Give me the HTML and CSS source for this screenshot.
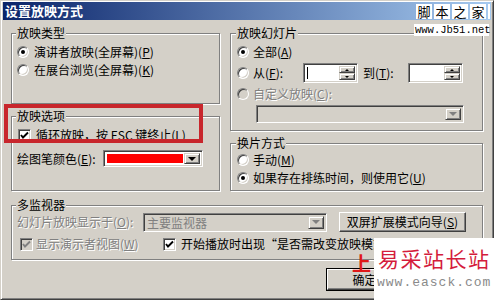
FILE: index.html
```html
<!DOCTYPE html>
<html lang="zh-CN">
<head>
<meta charset="utf-8">
<title>设置放映方式</title>
<link rel="stylesheet" href="styles.css">
</head>
<body>
<div class="window">
  <div class="titlebar">设置放映方式</div>
  <div class="content">
    <div class="cols">
      <div class="col">
        <fieldset class="grp g-type">
          <legend>放映类型</legend>
          <div class="row"><span class="radio on"></span><span class="lbl">演讲者放映(全屏幕)(<u>P</u>)</span></div>
          <div class="row"><span class="radio"></span><span class="lbl">在展台浏览(全屏幕)(<u>K</u>)</span></div>
        </fieldset>
        <fieldset class="grp g-opts">
          <legend>放映选项</legend>
          <div class="row"><span class="check"><svg viewBox="0 0 11 11" width="11" height="11"><polyline points="2,5 4,7.5 9,2.5" fill="none" stroke="#000" stroke-width="1.9"/></svg></span><span class="lbl">循环放映，按 ESC 键终止(<u>L</u>)</span></div>
          <div class="row row-pen"><span class="pen-lbl">绘图笔颜色(<u>E</u>):</span><span class="field combo color-combo"><span class="swatch"></span><span class="dd"><i class="arrow"></i></span></span></div>
        </fieldset>
      </div>
      <div class="col">
        <fieldset class="grp g-slides">
          <legend>放映幻灯片</legend>
          <div class="row"><span class="radio on"></span><span class="lbl">全部(<u>A</u>)</span></div>
          <div class="row row-range"><span class="radio"></span><span class="lbl from-lbl">从(<u>F</u>):</span><span class="field spin"><span class="caret"></span><span class="spin-btns"><span class="sb"><i class="up"></i></span><span class="sb"><i class="down"></i></span></span></span><span class="to-lbl">到(<u>T</u>):</span><span class="field spin"><span class="spin-btns"><span class="sb"><i class="up"></i></span><span class="sb"><i class="down"></i></span></span></span></div>
          <div class="row"><span class="radio off"></span><span class="lbl dis">自定义放映(<u>C</u>):</span></div>
          <div class="field combo disabled custom-combo"><span class="dd"><i class="arrow grey"></i></span></div>
        </fieldset>
        <fieldset class="grp g-adv">
          <legend>换片方式</legend>
          <div class="row"><span class="radio"></span><span class="lbl">手动(<u>M</u>)</span></div>
          <div class="row"><span class="radio on"></span><span class="lbl">如果存在排练时间，则使用它(<u>U</u>)</span></div>
        </fieldset>
      </div>
    </div>
    <fieldset class="grp g-mon">
      <legend>多监视器</legend>
      <div class="row mon1"><span class="dis mon-lbl">幻灯片放映显示于(<u>O</u>):</span><span class="field combo disabled mon-combo"><span class="val">主要监视器</span><span class="dd"><i class="arrow grey"></i></span></span><button class="btn wiz">双屏扩展模式向导(<u>S</u>)</button></div>
      <div class="row mon2"><span class="check off"><svg viewBox="0 0 11 11" width="11" height="11"><polyline points="2,5 4,7.5 9,2.5" fill="none" stroke="#808080" stroke-width="1.9"/></svg></span><span class="lbl dis pres">显示演示者视图(<u>W</u>)</span><span class="check"><svg viewBox="0 0 11 11" width="11" height="11"><polyline points="2,5 4,7.5 9,2.5" fill="none" stroke="#000" stroke-width="1.9"/></svg></span><span class="lbl prompt">开始播放时出现“是否需改变放映模式”提示(<u>N</u>)</span></div>
    </fieldset>
    <div class="actions"><button class="btn default">确定</button><button class="btn">取消</button></div>
  </div>
</div>
<div class="highlight"></div>
<div class="wm-jb">
  <div class="jb-boxes"><span>脚</span><span>本</span><span>之</span><span>家</span><span class="bar"></span></div>
  <div class="jb-url">www.Jb51.net</div>
</div>
<div class="wm-red">上</div>
<div class="wm-easck">
  <div class="easck-name">易采站长站</div>
  <div class="easck-url">www.easck.com</div>
</div>
</body>
</html>
```
FILE: styles.css
```css
* { box-sizing: border-box; }
html, body { margin: 0; padding: 0; }
body {
  position: relative;
  width: 494px;
  height: 300px;
  overflow: hidden;
  background: #d4d0c8;
  color: #000;
  font: 12px/18px "Noto Sans CJK SC", "Liberation Sans", sans-serif;
}
u { text-decoration: underline; text-underline-offset: 1px; }

.window {
  width: 494px;
  height: 300px;
  border: 1px solid;
  border-color: #d4d0c8 #404040 #404040 #d4d0c8;
  box-shadow: inset 1px 1px #fff, inset -1px -1px #808080;
  padding: 1px 2px 2px 2px;
}
.titlebar {
  height: 18px;
  line-height: 18px;
  padding-left: 2px;
  background: linear-gradient(to right, #0a246a, #a6caf0);
  color: #fff;
  font-weight: bold;
  font-size: 13px;
}
.content { padding: 0 8px; }
.cols {
  display: grid;
  grid-template-columns: 209px 253px;
  column-gap: 10px;
  margin-top: 6px;
}
.col { display: flex; flex-direction: column; }

.grp {
  margin: 0;
  min-width: 0;
  border: 1px solid #808080;
  box-shadow: 1px 1px 0 #fff, inset 1px 1px 0 #fff;
  padding: 3px 5px 0 5px;
}
.grp legend {
  padding: 0 1px;
  margin-left: -1px;
  line-height: 14px;
  font-size: 12px;
  background: #d4d0c8;
}
.g-type { height: 78px; }
.g-opts { height: 82px; margin-top: 5px; }
.g-slides { height: 105px; padding-left: 6px; }
.g-adv { height: 55px; margin-top: 5px; padding-left: 6px; padding-top: 1px; }
.g-mon { height: 62px; margin-top: 7px; padding-top: 0; }

.row { display: flex; align-items: center; height: 18px; white-space: nowrap; }
.lbl { margin-left: 5px; }
.dis { color: #808080; text-shadow: 1px 1px 0 #fff; }

.radio {
  position: relative;
  flex: none;
  width: 12px;
  height: 12px;
  border-radius: 50%;
  border: 1px solid;
  border-color: #808080 #fff #fff #808080;
  background: #fff;
  box-shadow: inset 1px 1px #404040, inset -1px -1px #d4d0c8;
}
.radio.on::after {
  content: "";
  position: absolute;
  left: 3px;
  top: 3px;
  width: 4px;
  height: 4px;
  border-radius: 50%;
  background: #000;
}
.radio.off { background: #d4d0c8; }

.check {
  flex: none;
  width: 13px;
  height: 13px;
  border: 1px solid;
  border-color: #808080 #fff #fff #808080;
  box-shadow: inset 1px 1px #404040, inset -1px -1px #d4d0c8;
  background: #fff;
  display: flex;
  align-items: center;
  justify-content: center;
}
.check svg { display: block; }
.check.off { background: #d4d0c8; }
.g-opts .row .check { margin-left: 1px; }

.field {
  border: 1px solid;
  border-color: #808080 #fff #fff #808080;
  box-shadow: inset 1px 1px #404040, inset -1px -1px #d4d0c8;
  background: #fff;
  padding: 2px;
}
.combo { display: flex; align-items: stretch; }
.combo.disabled { background: #d4d0c8; }
.dd {
  margin-left: auto;
  width: 16px;
  flex: none;
  border: 1px solid;
  border-color: #d4d0c8 #404040 #404040 #d4d0c8;
  box-shadow: inset 1px 1px #fff, inset -1px -1px #808080;
  background: #d4d0c8;
  display: flex;
  align-items: center;
  justify-content: center;
}
.arrow {
  width: 0;
  height: 0;
  border-left: 4px solid transparent;
  border-right: 4px solid transparent;
  border-top: 4px solid #000;
}
.arrow.grey { border-top-color: #808080; }

.row-pen { height: 17px; margin-top: 6px; }
.color-combo { width: 100px; height: 17px; margin-left: 7px; }
.swatch { flex: 1; background: #f00; margin: 1px; }

.row-range { height: 22px; margin-top: 1px; margin-bottom: 1px; }
.from-lbl { width: 50px; margin-left: 4px; }
.g-slides .lbl { margin-left: 4px; }
.g-adv .lbl { margin-left: 4px; }
.spin {
  width: 55px;
  height: 20px;
  display: flex;
  align-items: stretch;
}
.caret { width: 1px; background: #000; margin: 1px 0 1px 1px; }
.spin-btns { margin-left: auto; width: 16px; display: flex; flex-direction: column; }
.sb {
  flex: 1;
  border: 1px solid;
  border-color: #d4d0c8 #404040 #404040 #d4d0c8;
  box-shadow: inset 1px 1px #fff, inset -1px -1px #808080;
  background: #d4d0c8;
  display: flex;
  align-items: center;
  justify-content: center;
}
.sb .up { width: 0; height: 0; border-left: 2px solid transparent; border-right: 2px solid transparent; border-bottom: 2px solid #000; }
.sb .down { width: 0; height: 0; border-left: 2px solid transparent; border-right: 2px solid transparent; border-top: 2px solid #000; }
.to-lbl { width: 45px; margin-left: 5px; }

.custom-combo { width: 208px; height: 18px; margin: 2px 0 0 19px; }

.mon1 { height: 20px; }
.mon-lbl { width: 126px; }
.mon-combo { width: 184px; height: 19px; }
.mon-combo .val { padding-left: 1px; line-height: 13px; color: #808080; }
.btn {
  font: inherit;
  color: #000;
  border: 1px solid;
  border-color: #fff #404040 #404040 #fff;
  box-shadow: inset -1px -1px #808080, inset 1px 1px #d4d0c8;
  background: #d4d0c8;
  padding: 0;
  line-height: 16px;
}
.wiz { width: 127px; height: 20px; margin-left: 12px; }
.mon2 { margin-top: 3px; }
.mon2 .check.off { margin-left: 3px; }
.pres { margin-left: 3px; width: 127px; }
.prompt { margin-left: 5px; }

.actions { display: flex; justify-content: flex-end; gap: 6px; margin-top: 9px; }
.actions .btn { width: 75px; height: 21px; }
.actions .default { outline: 1px solid #000; outline-offset: 0; }

.highlight {
  position: absolute;
  left: 4px;
  top: 104px;
  width: 199px;
  height: 39px;
  border: 4px solid #c8262c;
}

.wm-jb { position: absolute; left: 414px; top: 4px; width: 76px; }
.jb-boxes { display: flex; gap: 2px; padding-left: 2px; }
.jb-boxes span {
  width: 16px;
  height: 15px;
  background: #fff;
  color: #000;
  font-size: 13px;
  line-height: 15px;
  text-align: center;
}
.jb-boxes .bar { width: 2px; }
.jb-url {
  margin-top: 5px;
  background: #fff;
  font: 10.5px/12px "Liberation Mono", monospace;
  color: #000;
  padding-left: 1px;
  width: 75px;
}

.wm-red {
  position: absolute;
  left: 352px;
  top: 252px;
  color: #e01818;
  font-size: 19px;
  line-height: 22px;
  font-weight: bold;
}
.wm-easck {
  position: absolute;
  left: 374px;
  top: 238px;
  width: 120px;
  height: 62px;
  background: #fff;
}
.easck-name {
  margin-top: 6px;
  padding-left: 4px;
  font-size: 21px;
  line-height: 28px;
  letter-spacing: 1.5px;
  color: #d41c3c;
  white-space: nowrap;
}
.easck-url {
  margin-top: 3px;
  padding-left: 3px;
  font: 13px/16px "Liberation Mono", monospace;
  letter-spacing: 1px;
  color: #8a8a8a;
  white-space: nowrap;
}
```
